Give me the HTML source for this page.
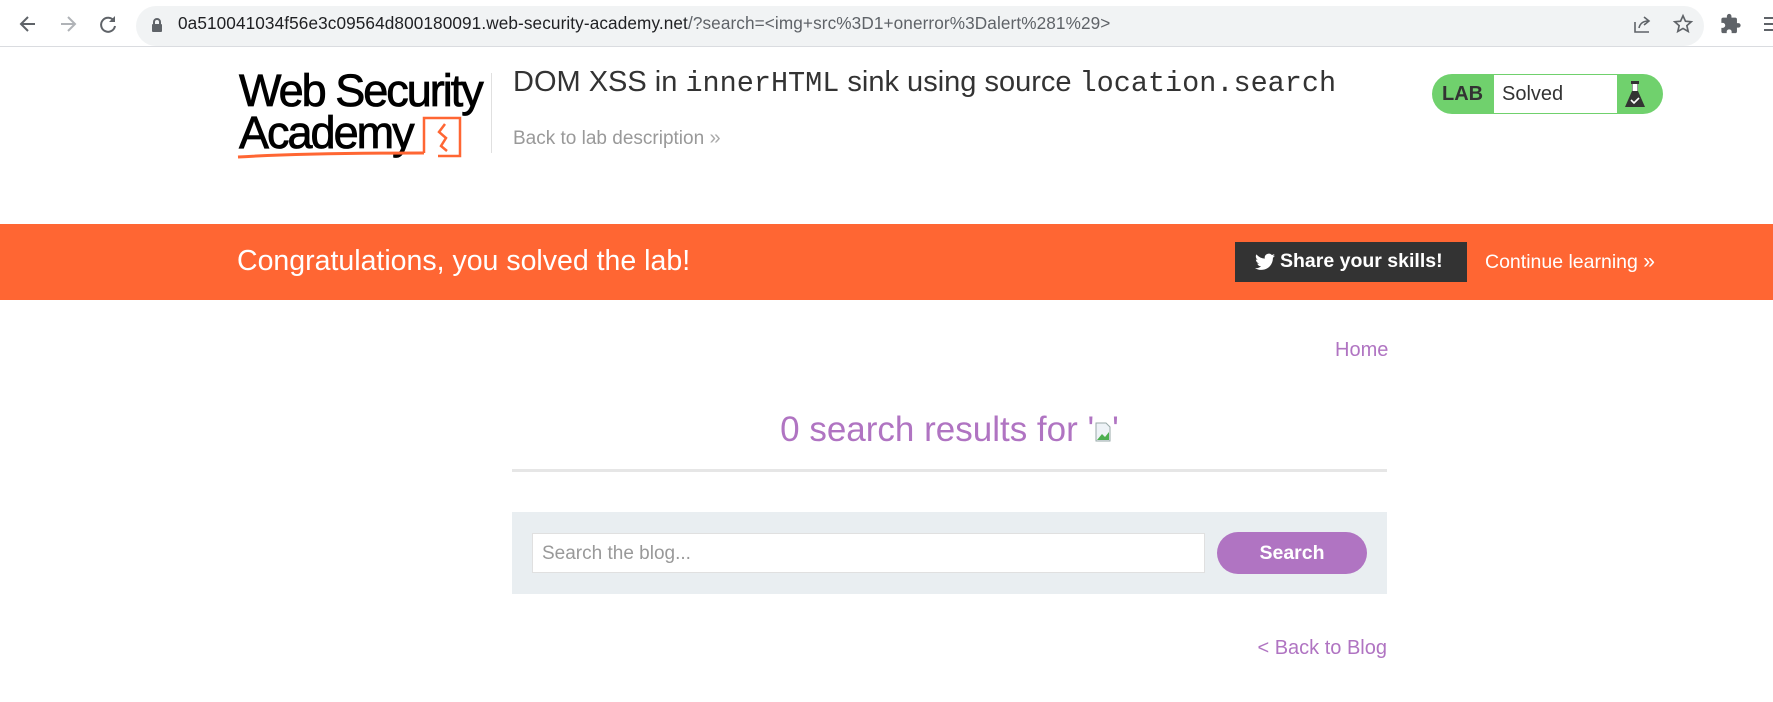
<!DOCTYPE html>
<html><head><meta charset="utf-8"><style>
*{margin:0;padding:0;box-sizing:border-box}
body{width:1773px;height:702px;overflow:hidden;background:#fff;font-family:"Liberation Sans",Arial,sans-serif;position:relative}
.a{position:absolute;white-space:nowrap}
.top{position:absolute;left:0;top:0;width:1773px;height:47px;background:#fff;border-bottom:1px solid #dadce0}
.pill{position:absolute;left:136px;top:6px;width:1568px;height:40px;border-radius:20px;background:#f1f3f4}
.url{position:absolute;left:178px;top:13px;font-size:17.2px;letter-spacing:0.1px;color:#202124}
.url span{color:#5f6368}
.mono{font-family:"Liberation Mono","DejaVu Sans Mono",monospace}
</style></head><body>
<div class="top">
 <svg class="a" style="left:17px;top:13px" width="22" height="22" viewBox="0 0 22 22"><path d="M18 11H5M11 4l-7 7 7 7" fill="none" stroke="#5f6368" stroke-width="2"/></svg>
 <svg class="a" style="left:57px;top:13px" width="22" height="22" viewBox="0 0 22 22"><path d="M4 11h13M11 4l7 7-7 7" fill="none" stroke="#b0b3b7" stroke-width="2"/></svg>
 <svg class="a" style="left:97px;top:13px" width="22" height="22" viewBox="0 0 22 22"><path d="M17 8a7 7 0 1 0 1 5" fill="none" stroke="#5f6368" stroke-width="2"/><path d="M18 3v6h-6z" fill="#5f6368"/></svg>
 <div class="pill"></div>
 <svg class="a" style="left:151px;top:17px" width="12" height="16" viewBox="0 0 12 16"><rect x="1" y="7" width="10" height="8" rx="1" fill="#5f6368"/><path d="M3 7V5a3 3 0 0 1 6 0v2" fill="none" stroke="#5f6368" stroke-width="2"/></svg>
 <div class="a url">0a510041034f56e3c09564d800180091.web-security-academy.net<span>/?search=&lt;img+src%3D1+onerror%3Dalert%281%29&gt;</span></div>
 <svg class="a" style="left:1632px;top:14px" width="20" height="20" viewBox="0 0 20 20"><path d="M3 8v10h14M7 14c1-5 5-7 9-7M12 3l5 4-5 4" fill="none" stroke="#5f6368" stroke-width="1.6"/></svg>
 <svg class="a" style="left:1672px;top:13px" width="22" height="22" viewBox="0 0 24 24"><path d="M12 3l2.7 6 6.3.6-4.8 4.2 1.5 6.3L12 16.8 6.3 20.1l1.5-6.3L3 9.6l6.3-.6z" fill="none" stroke="#5f6368" stroke-width="1.8"/></svg>
 <svg class="a" style="left:1720px;top:13px" width="22" height="22" viewBox="0 0 24 24"><path d="M20 11h-1.5V7a2 2 0 0 0-2-2h-4V3.5a2.5 2.5 0 0 0-5 0V5h-4a2 2 0 0 0-2 2v3.8h1.5a2.7 2.7 0 0 1 0 5.4H1.5V20a2 2 0 0 0 2 2h3.8v-1.5a2.7 2.7 0 0 1 5.4 0V22h3.8a2 2 0 0 0 2-2v-4H20a2.5 2.5 0 0 0 0-5z" fill="#5f6368"/></svg>
 <div class="a" style="left:1764px;top:17px;width:12px;height:2px;background:#5f6368;box-shadow:0 6px 0 #5f6368,0 12px 0 #5f6368"></div>
</div>

<!-- logo -->
<div class="a" style="left:239px;top:70px;font-size:45px;line-height:42px;letter-spacing:-2px;color:#000;-webkit-text-stroke:0.8px #000">Web Security<br>Academy</div>
<svg class="a" style="left:236px;top:112px" width="230" height="50" viewBox="0 0 230 50"><path d="M2 45c50-3 120-4 186-4" stroke="#ff6633" stroke-width="3" fill="none"/><path d="M188 41V6h36v38h-22" stroke="#ff6633" stroke-width="2.5" fill="none"/><path d="M209 12l-6 8 7 6-5 8 6 5" stroke="#ff6633" stroke-width="2.5" fill="none"/></svg>
<div class="a" style="left:491px;top:73px;width:1px;height:80px;background:#e0e0e0"></div>

<div class="a" style="left:513px;top:66px;font-size:29px;color:#333">DOM XSS in <span class="mono" style="font-size:28.5px">innerHTML</span> sink using source <span class="mono" style="font-size:28.5px">location.search</span></div>
<div class="a" style="left:513px;top:127px;font-size:19px;color:#999">Back to lab description <span style="font-size:20px;color:#aaa">&#187;</span></div>

<!-- lab badge -->
<div class="a" style="left:1432px;top:74px;width:231px;height:40px;border-radius:20px;background:#70d16d"></div>
<div class="a" style="left:1442px;top:83px;font-size:20px;font-weight:bold;color:#333">LAB</div>
<div class="a" style="left:1494px;top:75px;width:123px;height:38px;background:#fff"></div>
<div class="a" style="left:1502px;top:83px;font-size:20px;color:#333">Solved</div>
<svg class="a" style="left:1623px;top:80px" width="24" height="30" viewBox="0 0 24 30"><rect x="8" y="1" width="8" height="3" fill="#333"/><path d="M9 4v7L2 27h20L15 11V4z" fill="#333"/><rect x="9.5" y="4" width="5" height="7" fill="#fff"/><path d="M8 20l3 3 5-5" stroke="#fff" stroke-width="1.6" fill="none"/></svg>

<!-- banner -->
<div class="a" style="left:0;top:224px;width:1773px;height:76px;background:#ff6633"></div>
<div class="a" style="left:237px;top:245px;font-size:28.5px;color:#fff">Congratulations, you solved the lab!</div>
<div class="a" style="left:1235px;top:242px;width:232px;height:40px;background:#333"></div>
<svg class="a" style="left:1255px;top:253px" width="20" height="18" viewBox="0 0 24 20"><path d="M24 2.4a9.8 9.8 0 0 1-2.8.8A4.9 4.9 0 0 0 23.3.4a9.900 9.900 0 0 1-3.1 1.2A4.9 4.9 0 0 0 11.8 6 14 14 0 0 1 1.7.9a4.900 4.900 0 0 0 1.5 6.6A4.900 4.900 0 0 1 1 6.900a4.900 4.900 0 0 0 3.900 4.800 4.900 4.900 0 0 1-2.200.1 4.900 4.900 0 0 0 4.600 3.400A9.900 9.900 0 0 1 0 17.300 14 14 0 0 0 7.500 19.500c9.100 0 14-7.500 14-14v-.6A10 10 0 0 0 24 2.400z" fill="#fff"/></svg>
<div class="a" style="left:1280px;top:250px;font-size:19.5px;font-weight:bold;color:#fff">Share your skills!</div>
<div class="a" style="left:1485px;top:250px;font-size:19.5px;color:#fff">Continue learning <span style="font-size:21px">&#187;</span></div>

<!-- content -->
<div class="a" style="left:1335px;top:339px;font-size:20px;color:#b074c2">Home</div>
<div class="a" style="left:512px;top:410px;width:875px;text-align:center;font-size:35px;color:#b074c2">0 search results for '<svg width="18" height="22" viewBox="0 0 18 22" style="vertical-align:-2px"><path d="M2 2h10l4 4v14H2z" fill="#eef3f7" stroke="#9aa" stroke-width="1"/><path d="M3 19l5-6 3 3 4-5v8z" fill="#4caf50"/></svg>'</div>
<div class="a" style="left:512px;top:469px;width:875px;height:3px;background:#e6e6e6"></div>
<div class="a" style="left:512px;top:512px;width:875px;height:82px;background:#e9eef1"></div>
<div class="a" style="left:532px;top:533px;width:673px;height:40px;background:#fff;border:1px solid #e0e0e0"></div>
<div class="a" style="left:542px;top:543px;font-size:19px;color:#999">Search the blog...</div>
<div class="a" style="left:1217px;top:532px;width:150px;height:42px;border-radius:21px;background:#b074c2;color:#fff;font-size:19.5px;font-weight:bold;text-align:center;line-height:42px">Search</div>
<div class="a" style="left:1257px;top:637px;width:130px;text-align:right;font-size:20px;color:#b074c2">&lt; Back to Blog</div>
</body></html>
